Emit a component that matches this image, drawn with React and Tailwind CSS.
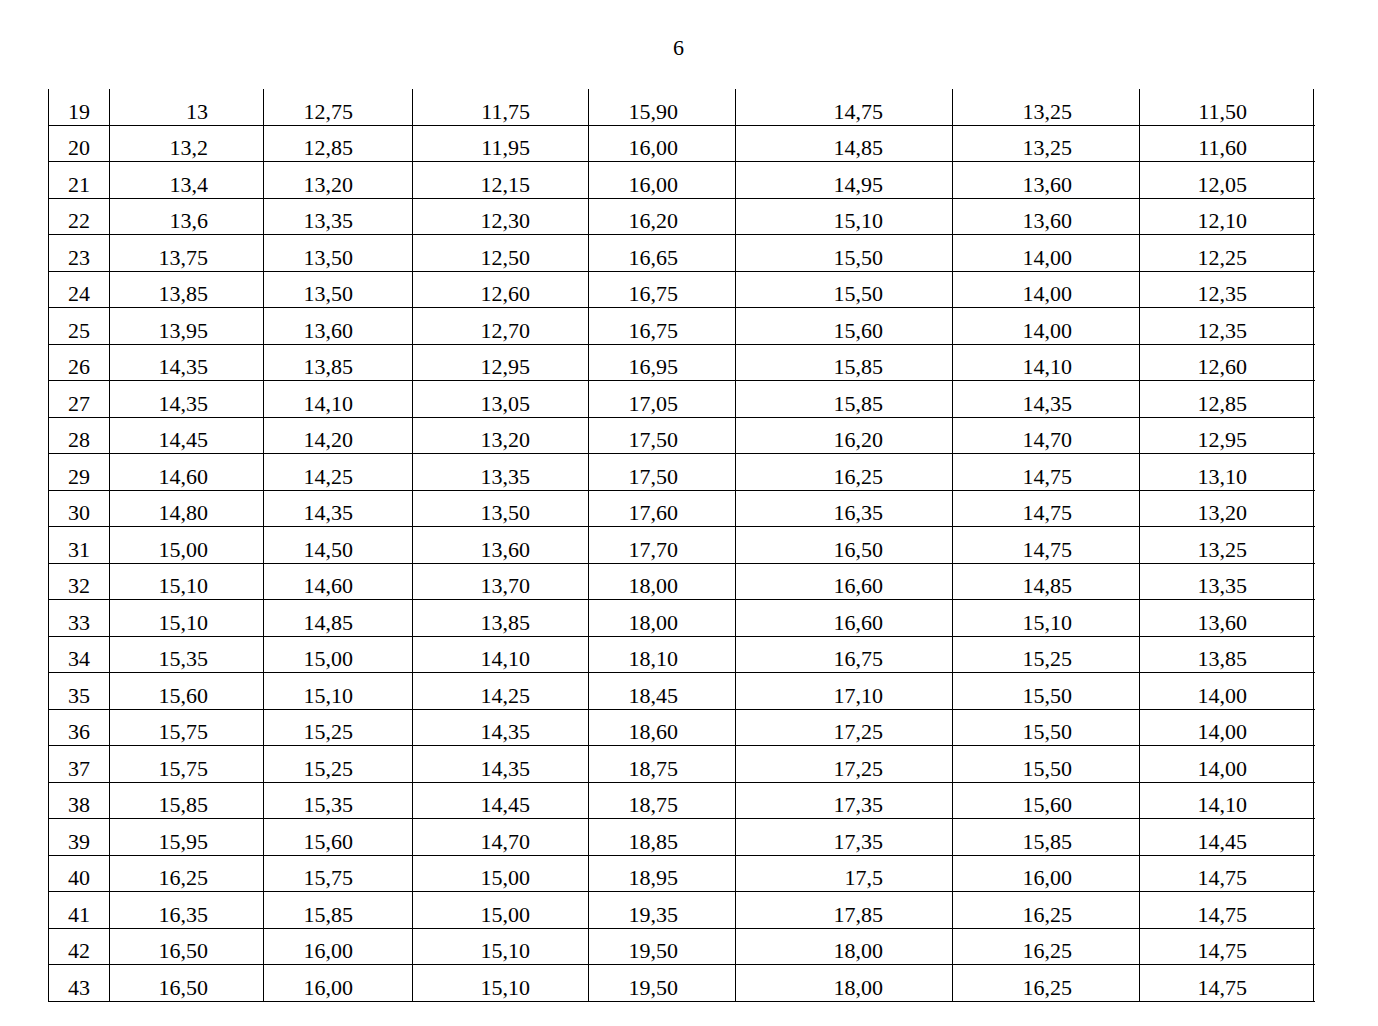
import React from 'react';

const rows = [
  ['19', '13', '12,75', '11,75', '15,90', '14,75', '13,25', '11,50'],
  ['20', '13,2', '12,85', '11,95', '16,00', '14,85', '13,25', '11,60'],
  ['21', '13,4', '13,20', '12,15', '16,00', '14,95', '13,60', '12,05'],
  ['22', '13,6', '13,35', '12,30', '16,20', '15,10', '13,60', '12,10'],
  ['23', '13,75', '13,50', '12,50', '16,65', '15,50', '14,00', '12,25'],
  ['24', '13,85', '13,50', '12,60', '16,75', '15,50', '14,00', '12,35'],
  ['25', '13,95', '13,60', '12,70', '16,75', '15,60', '14,00', '12,35'],
  ['26', '14,35', '13,85', '12,95', '16,95', '15,85', '14,10', '12,60'],
  ['27', '14,35', '14,10', '13,05', '17,05', '15,85', '14,35', '12,85'],
  ['28', '14,45', '14,20', '13,20', '17,50', '16,20', '14,70', '12,95'],
  ['29', '14,60', '14,25', '13,35', '17,50', '16,25', '14,75', '13,10'],
  ['30', '14,80', '14,35', '13,50', '17,60', '16,35', '14,75', '13,20'],
  ['31', '15,00', '14,50', '13,60', '17,70', '16,50', '14,75', '13,25'],
  ['32', '15,10', '14,60', '13,70', '18,00', '16,60', '14,85', '13,35'],
  ['33', '15,10', '14,85', '13,85', '18,00', '16,60', '15,10', '13,60'],
  ['34', '15,35', '15,00', '14,10', '18,10', '16,75', '15,25', '13,85'],
  ['35', '15,60', '15,10', '14,25', '18,45', '17,10', '15,50', '14,00'],
  ['36', '15,75', '15,25', '14,35', '18,60', '17,25', '15,50', '14,00'],
  ['37', '15,75', '15,25', '14,35', '18,75', '17,25', '15,50', '14,00'],
  ['38', '15,85', '15,35', '14,45', '18,75', '17,35', '15,60', '14,10'],
  ['39', '15,95', '15,60', '14,70', '18,85', '17,35', '15,85', '14,45'],
  ['40', '16,25', '15,75', '15,00', '18,95', '17,5', '16,00', '14,75'],
  ['41', '16,35', '15,85', '15,00', '19,35', '17,85', '16,25', '14,75'],
  ['42', '16,50', '16,00', '15,10', '19,50', '18,00', '16,25', '14,75'],
  ['43', '16,50', '16,00', '15,10', '19,50', '18,00', '16,25', '14,75'],
];

// right padding of each column, so the numbers sit where the scan has them
const cellPad = [
  'pr-[19px]',
  'pr-[55px]',
  'pr-[59px]',
  'pr-[58px]',
  'pr-[57px]',
  'pr-[69px]',
  'pr-[67px]',
  'pr-[66px] border-r',
];

export default function App() {
  return (
    <div className="min-h-screen bg-white text-black font-['Liberation_Serif','Times_New_Roman',serif] text-[22px] leading-[25px]">
      <div className="pt-[35px] pl-[48px] w-[1315px]">
        <div className="text-center pr-[6px]">6</div>

        <div className="mt-[29px]">
          {rows.map((row) => (
            <div
              key={row[0]}
              className="grid grid-cols-[61px_154px_149px_176px_147px_217px_187px_175px] h-[36.5px] border-b border-black"
            >
              {row.map((val, i) => (
                <div
                  key={i}
                  className={`flex items-end justify-end pb-[1px] border-l border-black ${cellPad[i]}`}
                >
                  {val}
                </div>
              ))}
            </div>
          ))}
        </div>
      </div>
    </div>
  );
}
